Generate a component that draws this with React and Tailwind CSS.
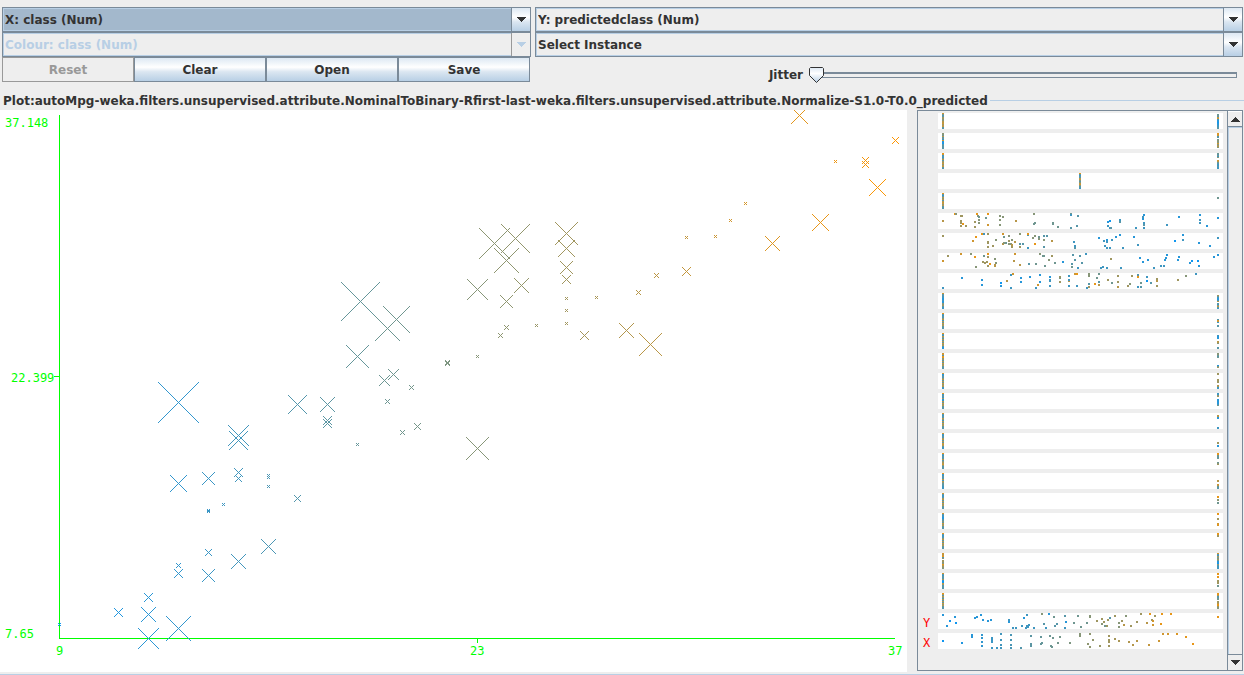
import { useState } from 'react';

const tone = (t) => {
  const red = Math.round(15 + 240 * Math.min(1, Math.max(0, t)));
  return `rgb(${red},150,${255 - red})`;
};

// [x, y, half size] of every cross; the size grows with the prediction error
const CROSSES = [
  [59, 624, 1], [118, 612, 4], [148, 597, 4], [148, 614, 7], [148, 638, 10],
  [178, 628, 12], [178, 565, 2], [178, 573, 4], [178, 483, 8], [178, 402, 20],
  [208, 552, 3], [208, 575, 6], [208, 478, 6], [208, 510, 1], [208, 511, 1],
  [223, 504, 1], [238, 435, 10], [238, 440, 9], [238, 472, 4], [238, 478, 3],
  [238, 561, 7], [268, 546, 7], [268, 475, 1], [268, 477, 1], [268, 486, 1],
  [297, 404, 9], [297, 498, 3], [327, 404, 7], [327, 420, 4], [327, 423, 4],
  [357, 444, 1], [357, 356, 11], [360, 301, 19], [384, 380, 5], [387, 401, 2],
  [387, 328, 12], [393, 374, 5], [396, 319, 13], [402, 432, 2], [411, 387, 2],
  [417, 426, 3], [447, 362, 2], [447, 363, 2], [477, 356, 1], [477, 289, 10],
  [477, 448, 11], [494, 243, 15], [500, 335, 2], [506, 260, 12], [506, 301, 6],
  [506, 327, 2], [515, 238, 14], [521, 285, 7], [536, 325, 1], [566, 233, 11],
  [566, 248, 8], [566, 267, 6], [566, 279, 4], [566, 298, 1], [566, 310, 1],
  [566, 323, 1], [584, 335, 4], [596, 297, 1], [626, 330, 7], [638, 292, 2],
  [650, 344, 11], [656, 275, 2], [686, 271, 4], [686, 237, 1], [715, 236, 1],
  [730, 220, 1], [745, 203, 1], [772, 243, 7], [799, 115, 8], [820, 222, 8],
  [835, 161, 1], [865, 160, 3], [865, 164, 3], [877, 187, 8], [895, 140, 3],
];

// One digit per pixel row gives the class value in tenths; a dot is a gap
const LOW = 4;
const MID = 141;
const HIGH = 279;

const column = (x, codes) =>
  codes.split('').flatMap((c, y) => (c === '.' ? [] : [[x, y, Number(c), 1]]));

const binary = (low, high) => [...column(LOW, low), ...column(HIGH, high)];

const DISPLACEMENT = [
  [4, 7, 7], [16, 0, 9], [17, 0, 5], [22, 2, 6], [23, 2, 6], [22, 7, 6], [22, 9, 6], [24, 10, 9],
  [22, 12, 6], [27, 12, 6], [38, 0, 9], [39, 2, 5], [40, 3, 4], [36, 8, 6], [40, 6, 5], [40, 9, 5],
  [36, 13, 6], [49, 0, 9], [47, 4, 4], [49, 11, 8], [61, 2, 5], [64, 3, 5], [61, 6, 5], [61, 11, 5],
  [77, 7, 7], [95, 0, 5], [96, 9, 4], [95, 10, 4], [114, 9, 4], [114, 10, 4], [119, 13, 4],
  [132, 0, 4], [132, 1, 2], [139, 2, 3], [138, 12, 3], [132, 14, 3], [171, 7, 0], [169, 8, 1],
  [169, 12, 2], [171, 14, 2], [172, 14, 3], [181, 6, 2], [181, 8, 3], [205, 1, 1], [204, 3, 2],
  [204, 5, 1], [205, 9, 2], [205, 11, 3], [205, 14, 2], [197, 14, 2], [228, 11, 2], [240, 3, 1],
  [261, 1, 1], [261, 6, 2], [261, 9, 2], [268, 12, 1], [279, 4, 1],
];

const HORSEPOWER = [
  [4, 2, 6], [43, 0, 9], [45, 0, 2], [37, 3, 9], [34, 7, 8], [49, 0, 6], [49, 8, 6], [49, 9, 6],
  [49, 13, 6], [54, 12, 6], [57, 6, 5], [64, 0, 8], [65, 3, 4], [70, 2, 5], [70, 7, 6], [73, 6, 5],
  [76, 8, 7], [64, 10, 7], [65, 9, 5], [67, 9, 4], [72, 10, 5], [73, 11, 7], [73, 13, 6],
  [70, 10, 5], [81, 0, 5], [81, 10, 3], [84, 10, 3], [81, 13, 6], [89, 1, 3], [89, 0, 9],
  [89, 14, 2], [94, 4, 5], [96, 2, 5], [96, 10, 9], [100, 5, 5], [100, 3, 4], [105, 2, 3],
  [108, 2, 3], [105, 6, 5], [105, 13, 3], [113, 7, 7], [135, 8, 2], [136, 12, 2], [136, 14, 3],
  [160, 4, 1], [168, 6, 1], [165, 7, 2], [168, 8, 2], [173, 6, 2], [177, 3, 1], [181, 1, 1],
  [166, 12, 2], [168, 14, 2], [171, 14, 2], [184, 14, 2], [195, 3, 1], [199, 11, 2], [236, 7, 0],
  [244, 1, 1], [244, 6, 2], [260, 9, 1], [271, 12, 1], [279, 4, 2],
];

const WEIGHT = [
  [4, 7, 8], [9, 2, 6], [22, 0, 8], [32, 0, 5], [36, 3, 9], [37, 13, 5], [44, 8, 6], [46, 9, 6],
  [48, 8, 6], [45, 2, 4], [49, 0, 9], [49, 3, 6], [49, 12, 6], [51, 10, 9], [56, 5, 5], [57, 9, 5],
  [56, 11, 7], [56, 12, 7], [76, 0, 8], [75, 7, 7], [81, 11, 7], [90, 10, 3], [101, 0, 5],
  [104, 2, 4], [105, 2, 4], [97, 10, 4], [106, 12, 4], [110, 6, 5], [113, 2, 6], [116, 9, 4],
  [124, 8, 1], [134, 1, 3], [136, 6, 3], [133, 10, 3], [133, 13, 4], [139, 14, 2], [141, 2, 3],
  [143, 9, 3], [147, 0, 2], [162, 14, 2], [164, 13, 2], [168, 14, 2], [172, 5, 6], [182, 14, 2],
  [201, 4, 1], [204, 8, 1], [209, 6, 1], [215, 14, 2], [222, 12, 2], [225, 12, 2], [226, 6, 1],
  [227, 4, 1], [228, 1, 1], [240, 3, 1], [239, 6, 1], [251, 9, 1], [253, 7, 0], [259, 7, 0],
  [260, 12, 1], [275, 3, 1], [279, 1, 1],
];

const ACCELERATION = [
  [4, 14, 2], [23, 4, 1], [43, 6, 1], [43, 11, 1], [62, 9, 0], [62, 12, 1], [68, 7, 7], [72, 1, 2],
  [74, 0, 8], [72, 14, 2], [82, 4, 1], [82, 8, 1], [91, 3, 1], [101, 1, 1], [101, 8, 1],
  [99, 11, 8], [97, 14, 2], [111, 3, 1], [111, 6, 2], [111, 7, 2], [111, 12, 2], [121, 3, 6],
  [121, 4, 5], [121, 8, 6], [130, 2, 2], [130, 7, 7], [130, 6, 2], [130, 12, 2], [136, 0, 8],
  [138, 0, 9], [138, 12, 2], [150, 0, 5], [150, 2, 5], [150, 10, 3], [148, 14, 2], [150, 13, 6],
  [156, 10, 9], [158, 4, 4], [160, 0, 4], [160, 8, 3], [160, 11, 7], [169, 6, 6], [173, 9, 4],
  [179, 2, 6], [179, 8, 6], [179, 13, 7], [189, 12, 6], [191, 10, 5], [193, 2, 6], [199, 1, 3],
  [199, 3, 9], [199, 13, 2], [202, 9, 4], [202, 13, 3], [208, 3, 2], [208, 7, 0], [212, 9, 3],
  [218, 5, 6], [218, 7, 7], [218, 12, 6], [239, 6, 6], [247, 2, 5], [257, 0, 2],
];

const PREDICTED = [
  [4, 1, 1], [8, 12, 1], [11, 7, 0], [16, 3, 1], [17, 9, 0], [36, 4, 1], [38, 3, 1], [42, 1, 1],
  [44, 6, 1], [49, 7, 1], [52, 6, 1], [70, 6, 2], [70, 8, 1], [74, 14, 2], [77, 14, 2], [83, 12, 2],
  [85, 4, 1], [88, 1, 2], [88, 12, 2], [90, 11, 2], [87, 14, 2], [89, 13, 2], [95, 14, 2],
  [103, 0, 5], [105, 10, 3], [107, 14, 2], [110, 0, 1], [115, 3, 4], [116, 12, 3], [118, 10, 3],
  [126, 2, 3], [127, 8, 1], [126, 14, 2], [135, 9, 4], [139, 2, 4], [142, 13, 4], [148, 9, 4],
  [151, 2, 5], [151, 3, 5], [158, 7, 6], [163, 5, 6], [163, 10, 5], [165, 8, 6], [166, 12, 4],
  [168, 12, 6], [169, 6, 6], [171, 4, 3], [176, 2, 6], [180, 9, 5], [180, 13, 5], [183, 7, 6],
  [185, 11, 7], [187, 2, 5], [192, 12, 6], [198, 8, 6], [202, 0, 6], [208, 9, 7], [211, 0, 9],
  [213, 6, 6], [214, 7, 8], [214, 11, 8], [216, 2, 6], [222, 10, 9], [223, 0, 9], [232, 0, 9],
  [279, 3, 9],
];

const ACTUAL = [
  [4, 7], [23, 9], [33, 1], [33, 3], [43, 1], [43, 4], [43, 8], [43, 12], [53, 4], [53, 6], [53, 8],
  [53, 14], [58, 14], [62, 0], [62, 6], [62, 11], [62, 14], [72, 1], [72, 6], [72, 11], [72, 14],
  [82, 14], [92, 2], [92, 10], [92, 12], [102, 3], [102, 10], [103, 9], [111, 2], [112, 12],
  [113, 13], [114, 4], [119, 9], [121, 3], [131, 9], [141, 0], [141, 2], [149, 10], [151, 0],
  [151, 13], [154, 6], [161, 12], [170, 2], [170, 6], [170, 8], [170, 12], [176, 5], [180, 7],
  [190, 8], [194, 11], [198, 7], [210, 11], [220, 7], [224, 0], [229, 0], [238, 0], [247, 3],
  [254, 10],
].map(([x, y]) => [x, y, ((x - LOW) / (HIGH - LOW)) * 10]);

const STRIPS = [
  { dots: binary('8433665577867733', '.443782110112233') },
  { dots: binary('5547342811033333', '98833.455585675.') },
  { dots: binary('9823247366857733', '43425..874322322') },
  { dots: column(MID, '9323377535785332') },
  { dots: binary('9323757377857333', '....44..........') },
  { dots: DISPLACEMENT },
  { dots: HORSEPOWER },
  { dots: WEIGHT },
  { dots: ACCELERATION },
  { dots: binary('8332211211556322', '..6421127.325732') },
  { dots: binary('9323357273857333', '......3882..33..') },
  { dots: binary('9327537373857211', '..2111..775...33') },
  { dots: binary('8839956373857333', '55434.......146.') },
  { dots: binary('8123357373857622', '66....6666..7622') },
  { dots: binary('9233261173857333', '2256..1111124...') },
  { dots: binary('8323375273857333', '..7711........22') },
  { dots: binary('8223367373877322', '.........66.11..') },
  { dots: binary('9323337356785333', '994434...456....') },
  { dots: binary('9223337275433222', '.......77..87433') },
  { dots: binary('8322367373857333', '...99.55.44.....') },
  { dots: binary('8322113353857333', '99...66...898...') },
  { dots: binary('9322357373857333', '9966............') },
  { dots: binary('878935.665597655', '8326546411053222') },
  { dots: binary('8323336100763333', '99.99..6666.44..') },
  { dots: binary('9737537373857333', '9973344.66799655') },
  { label: 'Y', dots: PREDICTED },
  { label: 'X', dots: ACTUAL },
];

const BEVEL = 'bg-[linear-gradient(#dde8f3,#ffffff_40%,#dbe6f1_60%,#b8cfe5)]';

function Arrow({ up, muted }) {
  return (
    <svg width="10" height="5" aria-hidden="true" shapeRendering="crispEdges" className={muted ? 'fill-[#b8cfe5]' : 'fill-[#333333]'}>
      <path d={up ? 'M0 5h10L5 0z' : 'M0 0h10L5 5z'} />
    </svg>
  );
}

function Combo({ label, options, disabled, active }) {
  return (
    <div className="relative flex h-[25px] border border-[#7a8a99]">
      <select
        aria-label={label}
        disabled={disabled}
        className={`min-w-0 flex-1 appearance-none border border-[#b8cfe5] pr-5 pl-px font-bold opacity-100 outline-none ${
          active ? 'bg-[#a3b8cc]' : 'bg-[#eeeeee]'
        } ${disabled ? 'text-[#b8cfe5]' : 'text-[#333333]'}`}
      >
        {options.map((o) => (
          <option key={o}>{o}</option>
        ))}
      </select>
      <span
        className={`pointer-events-none absolute inset-y-0 right-0 flex w-[19px] items-center justify-center border-l ${
          disabled ? 'border-[#999999] bg-[#eeeeee]' : `border-[#7a8a99] ${BEVEL}`
        }`}
      >
        <Arrow muted={disabled} />
      </span>
    </div>
  );
}

function ToolButton({ children, disabled }) {
  return (
    <button
      type="button"
      disabled={disabled}
      className={`h-[25px] border font-bold ${
        disabled ? 'border-[#999999] bg-[#eeeeee] text-[#999999]' : `border-[#7a8a99] text-[#333333] ${BEVEL}`
      }`}
    >
      {children}
    </button>
  );
}

function JitterSlider() {
  const [value, setValue] = useState(0);
  return (
    <div className="grid grid-cols-[269fr_439fr] items-center pt-[10px]">
      <label htmlFor="jitter" className="pr-px text-right">
        Jitter
      </label>
      <div className="relative mr-[6px] ml-[5px] flex h-4 items-center">
        <div className="ml-[7px] h-[6px] flex-1 border border-t-2 border-[#7a8a99]" />
        <svg
          width="15"
          height="16"
          aria-hidden="true"
          className="absolute top-0"
          style={{ left: `calc((100% - 15px) * ${value / 50})` }}
        >
          <defs>
            <linearGradient id="knob" x1="0" y1="0" x2="0" y2="1">
              <stop offset="0" stopColor="#dde8f3" />
              <stop offset="0.4" stopColor="#ffffff" />
              <stop offset="1" stopColor="#b8cfe5" />
            </linearGradient>
          </defs>
          <path d="M1.5 .5h12l1 1v7l-7 7l-7-7v-7z" fill="url(#knob)" stroke="#333333" />
        </svg>
        <input
          id="jitter"
          type="range"
          min="0"
          max="50"
          value={value}
          onChange={(e) => setValue(Number(e.target.value))}
          className="absolute inset-0 w-full opacity-0"
        />
      </div>
    </div>
  );
}

function ScatterPlot() {
  return (
    <svg viewBox="0 110 907 562" className="h-full min-w-0 flex-1 bg-white" role="img" aria-label="Predicted class against class">
      <g shapeRendering="crispEdges" fill="none">
        <path d="M59.5 115V638.5H895M54 376.5h5M477.5 638v5" stroke="#00ff00" />
        {CROSSES.map(([x, y, h]) => (
          <path
            key={`${x}-${y}`}
            d={`M${x - h} ${y - h}L${x + h + 1} ${y + h + 1}M${x + h + 1} ${y - h}L${x - h} ${y + h + 1}`}
            stroke={tone((x - 59) / 836)}
          />
        ))}
      </g>
      <g fill="#00ff00" className="font-['DejaVu_Sans_Mono',monospace] text-[12px] font-normal">
        <text x="5" y="127">37.148</text>
        <text x="11" y="382">22.399</text>
        <text x="5" y="638">7.65</text>
        <text x="56" y="655">9</text>
        <text x="470" y="655">23</text>
        <text x="888" y="655">37</text>
      </g>
    </svg>
  );
}

function Strip({ label, dots }) {
  return (
    <li className="flex h-4">
      <span className="w-5 pl-[5px] font-['DejaVu_Sans_Mono',monospace] leading-5 font-normal text-[#ff0000]">{label}</span>
      <svg viewBox="0 0 285 16" className="h-4 flex-1 bg-white" shapeRendering="crispEdges" aria-hidden="true">
        {dots.map(([x, y, t, h = 2], i) => (
          <rect key={i} x={x} y={y} width="2" height={h} fill={tone(t / 10)} />
        ))}
      </svg>
    </li>
  );
}

function AttributeBars() {
  return (
    <div className="mr-px mb-px ml-[10px] flex w-[326px] border border-[#7a8a99]">
      <ul className="flex flex-1 flex-col gap-1 overflow-hidden pt-[2px] pr-1">
        {STRIPS.map((s, i) => (
          <Strip key={i} {...s} />
        ))}
      </ul>
      <div className="flex w-[15px] flex-col border-l border-[#7a8a99]">
        <button type="button" aria-label="Scroll up" className="flex h-4 items-center justify-center border-t border-b border-t-white border-b-[#7a8a99]">
          <Arrow up />
        </button>
        <div className="flex-1 border-t border-l border-[#b8cfe5]" />
        <button type="button" aria-label="Scroll down" className="flex h-4 items-center justify-center border-t border-[#7a8a99]">
          <Arrow />
        </button>
      </div>
    </div>
  );
}

export default function App() {
  return (
    <main className="flex h-screen flex-col overflow-hidden border-b border-[#b8cfe5] bg-[#eeeeee] font-['DejaVu_Sans',sans-serif] text-[12px] leading-4 font-bold text-[#333333]">
      <section className="grid grid-cols-[529fr_708fr] gap-1 pt-[7px] pr-px pl-0.5">
        <div>
          <Combo label="X axis" active options={['X: class (Num)', 'X: predictedclass (Num)']} />
          <Combo label="Colour" disabled options={['Colour: class (Num)']} />
          <div className="mr-px grid grid-cols-4">
            <ToolButton disabled>Reset</ToolButton>
            <ToolButton>Clear</ToolButton>
            <ToolButton>Open</ToolButton>
            <ToolButton>Save</ToolButton>
          </div>
        </div>
        <div>
          <Combo label="Y axis" options={['Y: predictedclass (Num)', 'Y: class (Num)']} />
          <Combo label="Select shape" options={['Select Instance', 'Rectangle', 'Polygon', 'Polyline']} />
          <JitterSlider />
        </div>
      </section>
      <div className="mt-[9px] flex h-[18px]">
        <h1 className="pt-px pl-[3px] whitespace-nowrap">
          Plot:autoMpg-weka.filters.unsupervised.attribute.NominalToBinary-Rfirst-last-weka.filters.unsupervised.attribute.Normalize-S1.0-T0.0_predicted
        </h1>
        <span className="mt-2 ml-0.5 h-px flex-1 bg-[#b8cfe5]" />
      </div>
      <section className="mb-0.5 flex min-h-0 flex-1">
        <ScatterPlot />
        <AttributeBars />
      </section>
    </main>
  );
}
